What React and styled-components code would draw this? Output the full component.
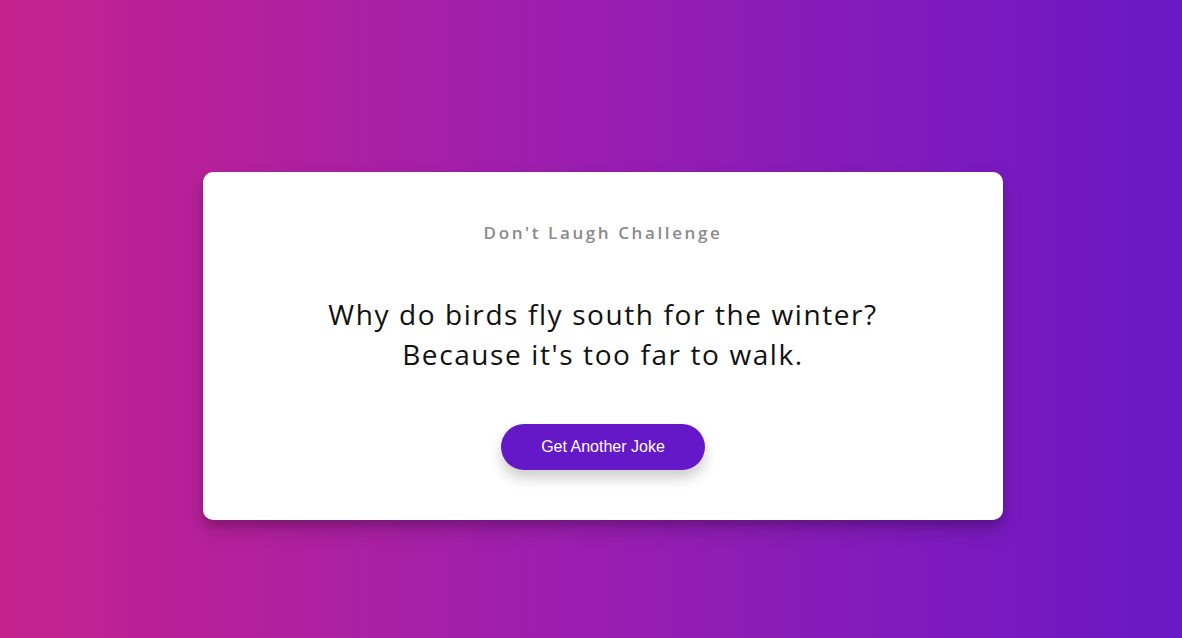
import React, { useState } from 'react';
import styled, { createGlobalStyle } from 'styled-components';

const GlobalStyle = createGlobalStyle`
    html, body {
        margin: 0;
        padding: 0;
    }
    body {
        font-family: 'Open Sans', 'Liberation Sans', sans-serif;
    }
`;

const Page = styled.div`
    min-height: 100vh;
    box-sizing: border-box;
    padding: 172px 0 0 24px;
    display: flex;
    justify-content: center;
    align-items: flex-start;
    background: linear-gradient(90deg, #c5228e 0%, #9a1eb1 50%, #6a18c6 100%);
`;

const Card = styled.div`
    width: 800px;
    box-sizing: border-box;
    padding: 50px 20px;
    background: #fff;
    border-radius: 10px;
    box-shadow: 0 10px 20px rgba(0, 0, 0, 0.18), 0 6px 6px rgba(0, 0, 0, 0.12);
    display: flex;
    flex-direction: column;
    align-items: center;
    gap: 50px;
    text-align: center;
`;

const Title = styled.h3`
    margin: 0;
    font-size: 17px;
    line-height: 22px;
    font-weight: 600;
    letter-spacing: 2.6px;
    color: #8a8a8a;
`;

const Joke = styled.div`
    font-size: 28px;
    line-height: 40px;
    letter-spacing: 1.6px;
    color: #111;
    max-width: 640px;
`;

const Button = styled.button`
    width: 204px;
    height: 46px;
    border: 0;
    border-radius: 24px;
    background: #6518c8;
    color: #fff;
    font-family: 'Liberation Sans', Arial, sans-serif;
    font-size: 16px;
    cursor: pointer;
    box-shadow: 0 8px 14px rgba(0, 0, 0, 0.2);
`;

const jokes = [
    ["Why do birds fly south for the winter?", "Because it's too far to walk."],
];

export default function App() {
    const [index, setIndex] = useState(0);
    const joke = jokes[index];

    return (
        <Page>
            <GlobalStyle />
            <Card>
                <Title>Don't Laugh Challenge</Title>
                <Joke>
                    {joke[0]}
                    <br />
                    {joke[1]}
                </Joke>
                <Button onClick={() => setIndex((index + 1) % jokes.length)}>
                    Get Another Joke
                </Button>
            </Card>
        </Page>
    );
}
